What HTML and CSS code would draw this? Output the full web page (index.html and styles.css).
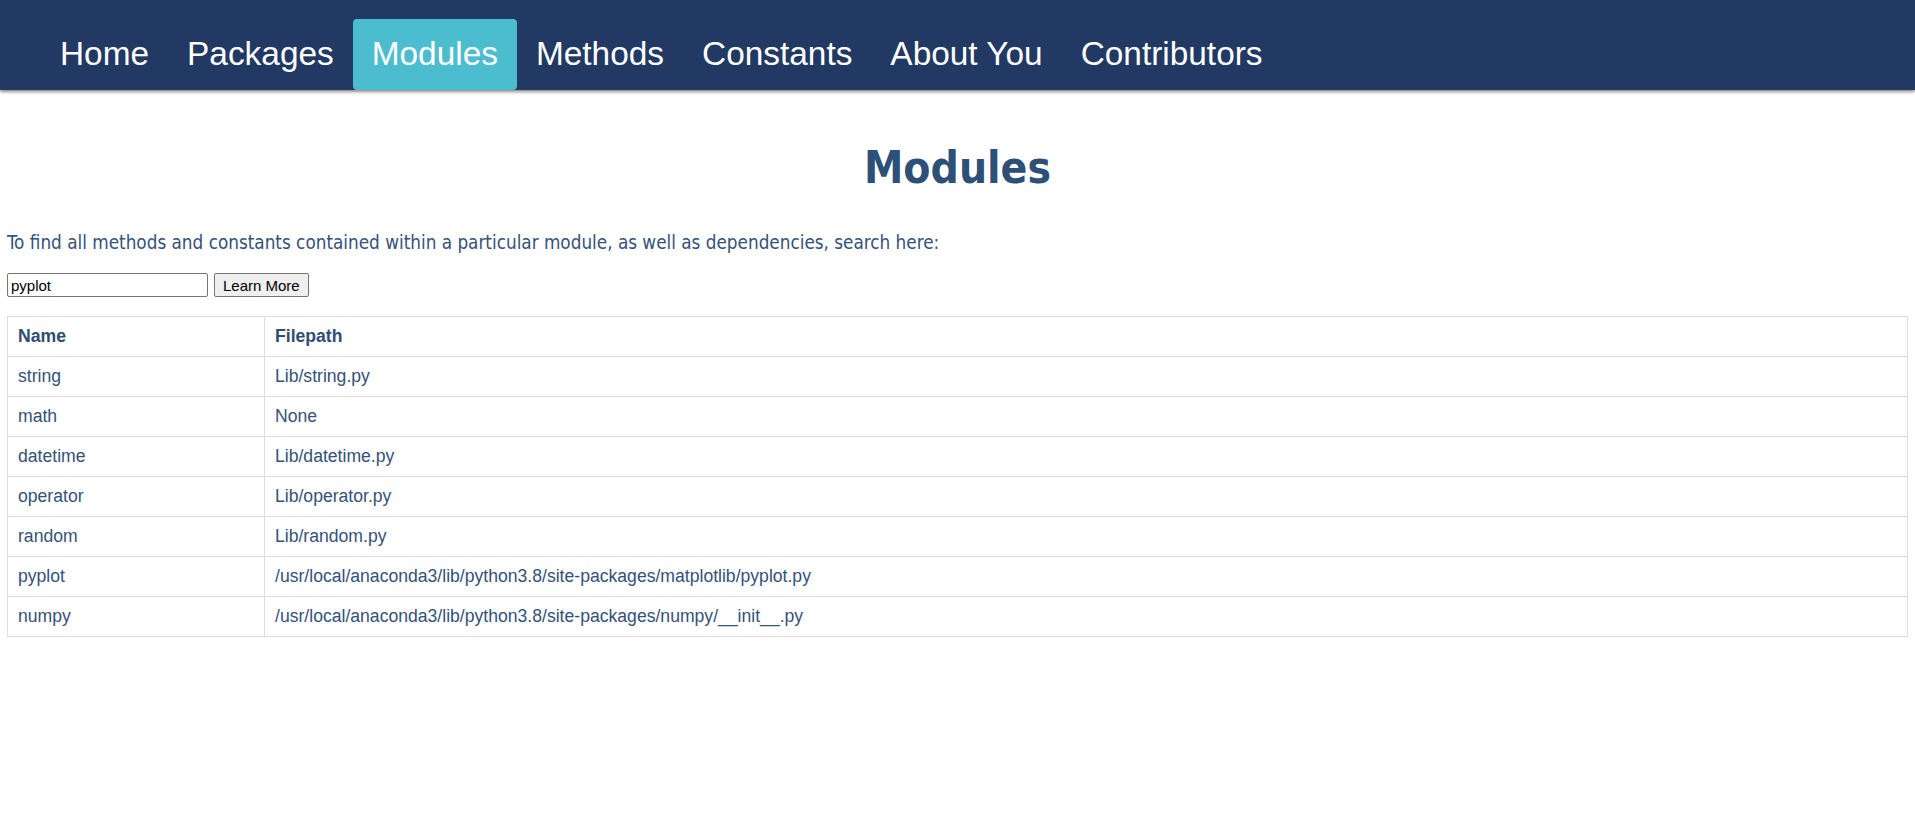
FILE: index.html
```html
<!DOCTYPE html>
<html lang="en">
<head>
<meta charset="utf-8">
<title>Modules</title>
<link rel="stylesheet" href="styles.css">
</head>
<body>
<nav class="navbar">
  <ul class="nav-list">
    <li><a class="nav-link" href="#">Home</a></li>
    <li><a class="nav-link" href="#">Packages</a></li>
    <li><a class="nav-link active" href="#">Modules</a></li>
    <li><a class="nav-link" href="#">Methods</a></li>
    <li><a class="nav-link" href="#">Constants</a></li>
    <li><a class="nav-link" href="#">About You</a></li>
    <li><a class="nav-link" href="#">Contributors</a></li>
  </ul>
</nav>
<main class="content">
  <h1 class="title">Modules</h1>
  <p class="intro">To find all methods and constants contained within a particular module, as well as dependencies, search here:</p>
  <form class="search">
    <input class="search-input" type="text" value="pyplot">
    <button class="search-btn" type="button">Learn More</button>
  </form>
  <table class="data-table">
    <thead>
      <tr><th class="col-name">Name</th><th>Filepath</th></tr>
    </thead>
    <tbody>
      <tr><td>string</td><td>Lib/string.py</td></tr>
      <tr><td>math</td><td>None</td></tr>
      <tr><td>datetime</td><td>Lib/datetime.py</td></tr>
      <tr><td>operator</td><td>Lib/operator.py</td></tr>
      <tr><td>random</td><td>Lib/random.py</td></tr>
      <tr><td>pyplot</td><td>/usr/local/anaconda3/lib/python3.8/site-packages/matplotlib/pyplot.py</td></tr>
      <tr><td>numpy</td><td>/usr/local/anaconda3/lib/python3.8/site-packages/numpy/__init__.py</td></tr>
    </tbody>
  </table>
</main>
</body>
</html>
```

FILE: styles.css
```css
* { box-sizing: border-box; }

html, body {
  margin: 0;
  padding: 0;
  background: #ffffff;
}

body {
  font-family: "DejaVu Sans Condensed", "DejaVu Sans", sans-serif;
  color: #2e4d74;
}

.navbar {
  background: #223a63;
  height: 90px;
  padding: 19px 0 0 41px;
  box-shadow: 0 2px 3px rgba(0, 0, 0, 0.45);
  position: relative;
  z-index: 1;
}

.nav-list {
  list-style: none;
  margin: 0;
  padding: 0;
  display: flex;
  height: 71px;
}

.nav-link {
  display: block;
  height: 71px;
  padding: 16px 19px 0 19px;
  font-family: "Liberation Sans", Arial, sans-serif;
  font-size: 33.4px;
  line-height: 38px;
  color: #ffffff;
  text-decoration: none;
  border-radius: 4px;
}

.nav-link.active {
  background: #4bbdcf;
}

.content {
  padding: 0 7px;
}

.title {
  margin: 51px 0 0 0;
  text-align: center;
  font-family: "DejaVu Sans Condensed", "DejaVu Sans", sans-serif;
  font-weight: bold;
  font-size: 44px;
  line-height: 53px;
  color: #2e5078;
}

.intro {
  margin: 38px 0 0 0;
  font-size: 18.75px;
  line-height: 22px;
  color: #34527a;
}

.search {
  display: flex;
  gap: 6px;
  margin: 19px 0 0 0;
  height: 24px;
}

.search-input {
  width: 201px;
  height: 24px;
  margin: 0;
  padding: 1px 3px;
  border: 1px solid #767676;
  border-radius: 2px;
  font-family: "Liberation Sans", Arial, sans-serif;
  font-size: 15px;
  color: #000000;
  background: #ffffff;
}

.search-btn {
  height: 24px;
  margin: 0;
  padding: 1px 8px;
  border: 1px solid #767676;
  border-radius: 2px;
  background: #efefef;
  font-family: "Liberation Sans", Arial, sans-serif;
  font-size: 15px;
  color: #000000;
}

.data-table {
  width: 100%;
  margin-top: 19px;
  border-collapse: collapse;
  font-family: "Liberation Sans", Arial, sans-serif;
  font-size: 17.6px;
  line-height: 23px;
  color: #34527a;
}

.data-table th,
.data-table td {
  border: 1px solid #dddddd;
  padding: 8px 10px;
  text-align: left;
  vertical-align: top;
}

.data-table th {
  font-weight: bold;
  color: #2e4d74;
}

.col-name {
  width: 257px;
}
```
